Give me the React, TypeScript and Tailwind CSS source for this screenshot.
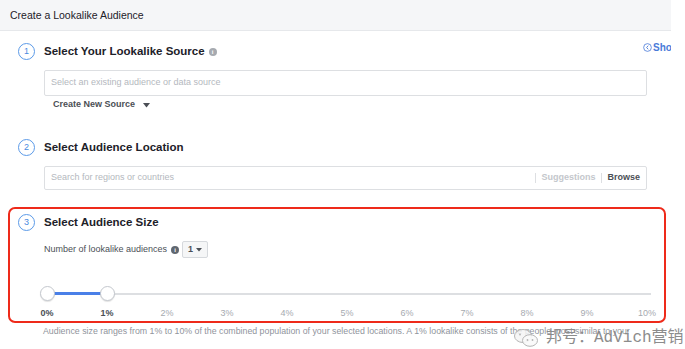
import React from "react";

function StepCircle({ n }: { n: number }) {
  return (
    <div className="w-[17px] h-[17px] shrink-0 rounded-full border-[1.5px] border-[#5b9ae8] flex items-center justify-center text-[9px] leading-none text-[#4a8ae0]">
      {n}
    </div>
  );
}

function InfoIcon({ dark }: { dark?: boolean }) {
  return (
    <span
      className={
        "inline-flex w-[8px] h-[8px] rounded-full items-center justify-center text-[6px] font-bold leading-none text-white " +
        (dark ? "bg-[#606770]" : "bg-[#a6aab0]")
      }
    >
      i
    </span>
  );
}

function Handle() {
  return (
    <div className="w-[15px] h-[15px] rounded-full bg-white border border-[#c4c8ce] shadow-[0_1px_1px_rgba(0,0,0,0.12)]" />
  );
}

export default function App() {
  const labels = ["0%", "1%", "2%", "3%", "4%", "5%", "6%", "7%", "8%", "9%", "10%"];
  return (
    <div className="relative w-[685px] h-[349px] overflow-hidden bg-white font-['Liberation_Sans',Arial,sans-serif]">
      {/* Header */}
      <div className="w-[671px] h-[31px] bg-[#f5f6f8] border-b border-[#e6e8eb] flex items-center pl-[10px] pt-[2px] text-[10.5px] text-[#1d2129]">
        Create a Lookalike Audience
      </div>

      <div className="pl-[18px]">
        {/* Section 1 */}
        <div className="mt-[12px] w-[653px] flex items-center">
          <StepCircle n={1} />
          <div className="ml-[9px] text-[11.5px] font-bold text-[#1d2129] leading-none">
            Select Your Lookalike Source
          </div>
          <div className="ml-[4px] flex items-center">
            <InfoIcon />
          </div>
          <div className="flex-1" />
          <div className="w-[28px] shrink-0 overflow-hidden self-start -mt-[3px]">
            <div className="w-[60px] flex items-center gap-[1px] text-[10px] font-bold text-[#4a7bd9]">
              <svg width="9" height="9" viewBox="0 0 10 10" className="shrink-0">
                <circle cx="5" cy="5" r="4.3" fill="none" stroke="#4a7bd9" strokeWidth="0.9" />
                <path d="M5.8 3 L4 5 L5.8 7" fill="none" stroke="#4a7bd9" strokeWidth="1" />
              </svg>
              <span>Show</span>
            </div>
          </div>
        </div>

        <div className="ml-[26px] mt-[10px] w-[603px] h-[26px] border border-[#dddfe2] rounded-[2px] flex items-center pl-[6px] text-[9px] text-[#b4b8be]">
          Select an existing audience or data source
        </div>
        <div className="ml-[35px] mt-[2px] h-[14px] flex items-center gap-[8px] text-[9px] font-bold text-[#4b4f56]">
          <span>Create New Source</span>
          <svg width="7" height="5" viewBox="0 0 7 5">
            <path d="M0 0 L7 0 L3.5 4.5 Z" fill="#4b4f56" />
          </svg>
        </div>

        {/* Section 2 */}
        <div className="mt-[27px] flex items-center">
          <StepCircle n={2} />
          <div className="ml-[9px] text-[11.5px] font-bold text-[#1d2129] leading-none">
            Select Audience Location
          </div>
        </div>
        <div className="ml-[26px] mt-[10px] w-[603px] h-[24px] border border-[#dddfe2] rounded-[2px] flex items-center pl-[6px] pr-[6px] text-[9px] text-[#b4b8be]">
          <span className="flex-1">Search for regions or countries</span>
          <span className="w-px h-[10px] bg-[#dddfe2]" />
          <span className="ml-[5px] font-bold text-[#c4c7cc]">Suggestions</span>
          <span className="ml-[6px] w-px h-[10px] bg-[#dddfe2]" />
          <span className="ml-[5px] font-bold text-[#4b4f56]">Browse</span>
        </div>
      </div>

      {/* Section 3, highlighted */}
      <div className="ml-[8px] mt-[17px] w-[658px] h-[116px] border-2 border-[#ee2a1a] rounded-[7px] pl-[8px] pt-[5px]">
        <div className="flex items-center">
          <StepCircle n={3} />
          <div className="ml-[9px] text-[11.5px] font-bold text-[#1d2129] leading-none">
            Select Audience Size
          </div>
        </div>
        <div className="ml-[26px] mt-[10px] h-[17px] flex items-center text-[9px] text-[#4b4f56]">
          <span>Number of lookalike audiences</span>
          <span className="ml-[4px] flex items-center">
            <InfoIcon dark />
          </span>
          <div className="ml-[3px] w-[26px] h-[17px] bg-[#f5f6f7] border border-[#d6d9dd] rounded-[2px] flex items-center justify-center gap-[3px] font-bold text-[#4b4f56]">
            <span>1</span>
            <svg width="6" height="4" viewBox="0 0 6 4">
              <path d="M0 0 L6 0 L3 3.5 Z" fill="#4b4f56" />
            </svg>
          </div>
        </div>

        {/* Slider */}
        <div className="relative ml-[29px] mt-[28px] w-[604px] h-[15px] flex items-center">
          <div className="w-full h-[2px] bg-[#dddfe2] flex">
            <div className="w-[60px] h-[3px] -mt-[0.5px] bg-[#4a80e8]" />
          </div>
          <div className="absolute left-[-7.5px] top-0">
            <Handle />
          </div>
          <div className="absolute left-[52.5px] top-0">
            <Handle />
          </div>
        </div>
        <div className="ml-[29px] mt-[6px] w-[600px] flex justify-between text-[9px] leading-[12px]">
          {labels.map((l, i) => (
            <div key={l} className="w-0 flex justify-center">
              <span
                className={
                  "whitespace-nowrap " +
                  (i < 2 ? "font-bold text-[#4b4f56]" : "text-[#a6aab0]")
                }
              >
                {l}
              </span>
            </div>
          ))}
        </div>
      </div>

      <div className="ml-[43px] mt-[2px] whitespace-nowrap text-[8.8px] leading-[12px] text-[#90949c]">
        Audience size ranges from 1% to 10% of the combined population of your selected locations. A 1% lookalike consists of the people most similar to your
      </div>

      {/* Watermark overlay */}
      <div className="absolute left-[513px] top-[328px] flex items-center gap-[7px] text-[#8c8c8c]">
        <svg width="26" height="20" viewBox="0 0 26 20">
          <ellipse cx="10" cy="8" rx="8.5" ry="6.5" fill="#f4f4f4" fillOpacity="0.85" stroke="#b5b5b5" strokeWidth="1" />
          <ellipse cx="17" cy="12.5" rx="7.5" ry="5.8" fill="#fafafa" fillOpacity="0.9" stroke="#b5b5b5" strokeWidth="1" />
          <circle cx="14.5" cy="12" r="0.9" fill="#b5b5b5" />
          <circle cx="19.5" cy="12" r="0.9" fill="#b5b5b5" />
          <circle cx="7" cy="6.5" r="0.9" fill="#b5b5b5" />
        </svg>
        <span className="text-[16px] leading-[20px] whitespace-nowrap font-['Liberation_Mono','Noto_Sans_CJK_SC',monospace]">
          邦号：AdVich营销
        </span>
      </div>
    </div>
  );
}
